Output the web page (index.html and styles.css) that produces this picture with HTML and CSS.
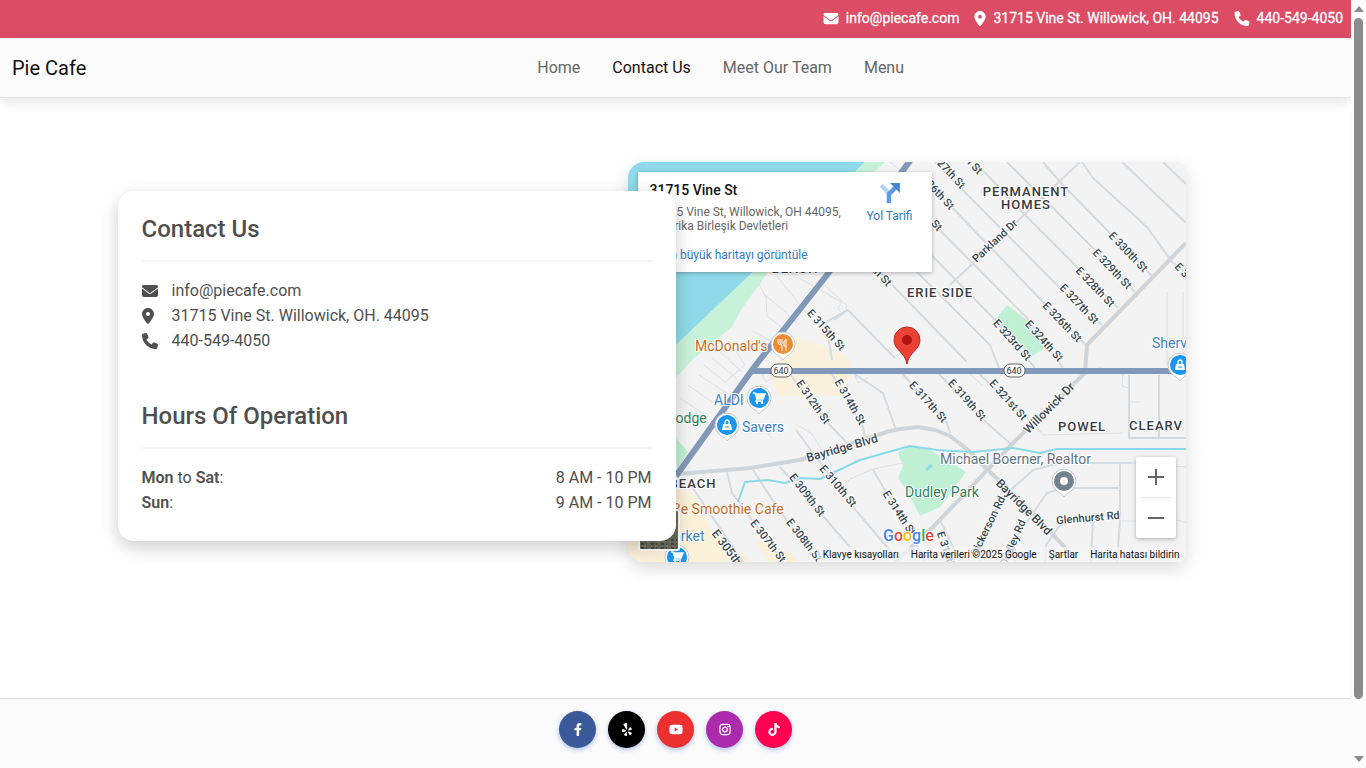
FILE: index.html
```html
<!DOCTYPE html>
<html lang="en">
<head>
  <meta charset="UTF-8">
  <meta name="viewport" content="width=device-width, initial-scale=1.0">
  <title>Pie Cafe - Contact Us</title>
  <link rel="stylesheet" href="styles.css">
</head>
<body>

  <!-- shared icons -->
  <svg class="sprite" aria-hidden="true">
    <symbol id="envelope" viewBox="0 0 512 512"><path d="M48 64C21.5 64 0 85.5 0 112c0 15.1 7.1 29.3 19.2 38.4L236.8 313.6c11.4 8.5 27 8.5 38.4 0L492.8 150.4c12.1-9.1 19.2-23.3 19.2-38.4c0-26.5-21.5-48-48-48L48 64zM0 176L0 384c0 35.3 28.7 64 64 64l384 0c35.3 0 64-28.7 64-64l0-208L294.4 339.2c-22.8 17.1-54 17.1-76.8 0L0 176z"/></symbol>
    <symbol id="location" viewBox="0 0 384 512"><path d="M215.7 499.2C267 435 384 279.4 384 192C384 86 298 0 192 0S0 86 0 192c0 87.4 117 243 168.3 307.2c12.3 15.3 35.1 15.3 47.4 0zM192 128a64 64 0 1 1 0 128 64 64 0 1 1 0-128z"/></symbol>
    <symbol id="phone" viewBox="0 0 512 512"><path d="M164.9 24.6c-7.7-18.6-28-28.5-47.4-23.2l-88 24C12.1 30.2 0 46 0 64C0 311.4 200.6 512 448 512c18 0 33.8-12.1 38.6-29.5l24-88c5.3-19.4-4.6-39.7-23.2-47.4l-96-40c-16.3-6.8-35.2-2.1-46.3 11.6L304.7 368C234.3 334.7 177.3 277.7 144 207.3L193.3 167c13.7-11.2 18.4-30 11.6-46.3l-40-96z"/></symbol>
    <symbol id="cart" viewBox="0 0 14 14"><path d="M1 2h2l2 6h6l2-5H4M5 8l-1 2h7" fill="none" stroke="#fff" stroke-width="1.4"/><path d="M4 3h9l-2 5H5z" fill="#fff"/><circle cx="5" cy="12" r="1.2" fill="#fff"/><circle cx="10" cy="12" r="1.2" fill="#fff"/></symbol>
    <symbol id="bag" viewBox="0 0 14 14"><path d="M3 6h8l1 6H2z" fill="#fff"/><path d="M5 7V4a2 2 0 0 1 4 0v3" fill="none" stroke="#fff" stroke-width="1.3"/><path d="M5 9h4" stroke="#1a96ee"/></symbol>
    <symbol id="marker" viewBox="0 0 28 32"><path d="M14 30C12 26 8 26 5 22a12 12 0 1 1 18 0C20 26 16 26 14 30z" fill="#fff" stroke="#c4c9ce" stroke-width="1"/><circle cx="14" cy="14" r="10" fill="currentColor"/></symbol>
  </svg>

  <div class="page">
    <header>
      <div class="topbar">
        <span class="topbar-item"><svg class="icon"><use href="#envelope"/></svg>info@piecafe.com</span>
        <span class="topbar-item"><svg class="icon icon-narrow"><use href="#location"/></svg>31715 Vine St. Willowick, OH. 44095</span>
        <span class="topbar-item"><svg class="icon"><use href="#phone"/></svg>440-549-4050</span>
      </div>
      <nav class="navbar">
        <a class="brand" href="#">Pie Cafe</a>
        <div class="nav-links">
          <a href="#">Home</a>
          <a class="active" href="#">Contact Us</a>
          <a href="#">Meet Our Team</a>
          <a href="#">Menu</a>
        </div>
      </nav>
    </header>

    <main class="container">
      <section class="card">
        <h2>Contact Us</h2>
        <hr>
        <ul class="contact-list">
          <li><span class="contact-icon"><svg><use href="#envelope"/></svg></span>info@piecafe.com</li>
          <li><span class="contact-icon"><svg class="pin"><use href="#location"/></svg></span>31715 Vine St. Willowick, OH. 44095</li>
          <li><span class="contact-icon"><svg><use href="#phone"/></svg></span>440-549-4050</li>
        </ul>
        <h2>Hours Of Operation</h2>
        <hr>
        <div class="hours"><span><strong>Mon</strong> to <strong>Sat</strong>:</span><span>8 AM - 10 PM</span></div>
        <div class="hours"><span><strong>Sun</strong>:</span><span>9 AM - 10 PM</span></div>
      </section>

      <section class="map">
        <svg class="map-canvas" viewBox="628 162 558 400" preserveAspectRatio="xMidYMid slice">
          <rect x="628" y="162" width="558" height="400" fill="#f3f3f4"/>
          <!-- water and land areas -->
          <path d="M628 162H865L753 272L676 345L628 390z" fill="#8fd9e8"/>
          <path d="M865 162H885L768 272L741 310L732 327L692 360L676 378V345L753 272z" fill="#c8f1d9"/>
          <path d="M676 438L688 452L677 470z" fill="#bdf0d3"/>
          <path d="M790 337L812 342L850 358V378L840 396H778L770 376z" fill="#faf1dc"/>
          <path d="M628 490H690L712 530L752 562H628zM756 540L790 552L798 562H768z" fill="#fbf0d8"/>
          <path d="M1007 305L1027 320L1045 348L1032 356L1018 345L995 320z" fill="#bff0d4"/>
          <path d="M898 453L910 446L930 450L966 472L940 507L920 516L908 492L898 478L903 466z" fill="#bff0d4"/>
          <path d="M926 470l6 -5" stroke="#8ed9e9" stroke-width="3"/>

          <!-- small lanes -->
          <g class="lane">
            <path d="M758 282L766 298L767 316L790 334M763 293L800 325M776 275L812 320M790 273L847 305L843 314L838 309L842 301L820 281M752 331L774 343M744 339L764 356M730 342L745 365L725 382L704 365M720 352L742 372M712 358L736 378M699 375L728 394M688 385L716 405M680 398L708 417"/>
            <path d="M890 162L900 170M796 424L812 434L832 466M761 372L766 382L776 376M855 375L858 383L868 378M1167 292V365M1183 292V368M1123 372L1122 386L1129 388V376M1130 402H1140M1132 463L1186 467M1122 521H1136M1176 520L1186 522M968 372L982 385M1090 373L1102 366M763 428L772 438M840 492L850 479L873 469L903 463"/>
          </g>
          <!-- streets -->
          <g class="street">
            <path d="M1163 162L1186 184M1122 162L1186 223M1082 162L1093 178L1147 227L1172 262L1186 273M1043 162L1060 182L1152 276M1007 162L1093 248L1135 292M975 162L1025 215L1118 308M935 162L1060 288L1102 325M918 172L1043 302L1086 345M910 200L1027 318L1063 368M905 228L997 322L1035 368M915 270L990 345L999 368M870 262L967 362"/>
            <path d="M1080 162L950 285M832 360L826 322L848 310L895 358M834 320L848 310"/>
            <path d="M790 374L828 423L850 446M832 374L863 427L866 445M853 373L883 393L896 430M899 370L947 423L950 433M935 370L987 423L1012 445M975 370L1037 427"/>
            <path d="M780 467L850 547M796 430L853 507L887 547L900 562M753 470L777 507L817 562M727 472L732 493L783 562M692 487L743 562M873 470L912 535L925 562M940 520L960 562"/>
            <path d="M980 562L985 530L1003 497L1033 470L1060 463H1132M1015 562L1014 540L1047 493L1063 488H1120M1045 562L1046 545L1060 525L1095 514L1120 517M1120 463V520L1117 562M1093 518L1091 562M1129 375V438H1186M1159 375V438"/>
          </g>
          <path class="lane" d="M1037 427L1043 435L1123 433"/>
          <g class="avenue">
            <path d="M1186 243L1087 345L1085 373L1013 443L933 527L895 562M678 474L750 468L800 460L850 444L890 431L900 429L918 427L935 430L950 436L968 450L990 472L1030 510L1072 555"/>
          </g>
          <path class="creek" d="M738 502L745 482L768 480L785 483L800 478L820 479L860 460L910 446L937 450L973 452L1013 448L1040 453L1057 449H1186"/>
          <!-- highways -->
          <path class="highway" d="M912 158L827 275L755 366L676 476"/>
          <path class="highway" d="M753 371H1186"/>

          <g class="shield">
            <rect x="771" y="364" width="21" height="13" rx="6"/><text x="781" y="374">640</text>
            <rect x="1004" y="364" width="21" height="13" rx="6"/><text x="1014" y="374">640</text>
          </g>

          <g class="street-name">
            <text transform="translate(951 174) rotate(47)">27th St</text>
            <text transform="translate(940 195) rotate(47)">26th St</text>
            <text transform="translate(926 214) rotate(47)">325th St</text>
            <text transform="translate(963 154) rotate(47)">E 328th St</text>
            <text transform="translate(995 241) rotate(-43)">Parkland Dr</text>
            <text transform="translate(1128 252) rotate(46)">E 330th St</text>
            <text transform="translate(1112 269) rotate(46)">E 329th St</text>
            <text transform="translate(1095 287) rotate(46)">E 328th St</text>
            <text transform="translate(1079 304) rotate(46)">E 327th St</text>
            <text transform="translate(1062 322) rotate(46)">E 326th St</text>
            <text transform="translate(1044 341) rotate(48)">E 324th St</text>
            <text transform="translate(1012 340) rotate(48)">E 323rd St</text>
            <text transform="translate(1195 284) rotate(46)">E 332nd St</text>
            <text transform="translate(872 266) rotate(47)">E 320th St</text>
            <text transform="translate(826 330) rotate(48)">E 315th St</text>
            <text transform="translate(813 402) rotate(55)">E 312th St</text>
            <text transform="translate(850 402) rotate(60)">E 314th St</text>
            <text transform="translate(928 402) rotate(48)">E 317th St</text>
            <text transform="translate(967 400) rotate(48)">E 319th St</text>
            <text transform="translate(1008 400) rotate(48)">E 321st St</text>
            <text transform="translate(838 486) rotate(50)">E 310th St</text>
            <text transform="translate(807 495) rotate(52)">E 309th St</text>
            <text transform="translate(768 541) rotate(52)">E 307th St</text>
            <text transform="translate(804 540) rotate(52)">E 308th St</text>
            <text transform="translate(899 513) rotate(57)">E 314th St</text>
            <text transform="translate(948 556) rotate(72)">E 316th St</text>
            <text transform="translate(988 526) rotate(-64)">Dickerson Rd</text>
            <text transform="translate(1013 543) rotate(-67)">Dudley Rd</text>
            <text transform="translate(1088 518) rotate(-5)">Glenhurst Rd</text>
          </g>
          <g class="street-name street-name-lg">
            <text transform="translate(731 553) rotate(53)">E 305th St</text>
            <text transform="translate(842 448) rotate(-16)">Bayridge Blvd</text>
            <text transform="translate(1024 507) rotate(45)">Bayridge Blvd</text>
            <text transform="translate(1049 408) rotate(-45)">Willowick Dr</text>
          </g>
          <g class="area-name">
            <text x="1026" y="196">PERMANENT</text>
            <text x="1026" y="209">HOMES</text>
            <text x="940" y="297">ERIE SIDE</text>
            <text x="795" y="273">BEACH</text>
            <text x="1082" y="431">POWEL</text>
            <text x="1156" y="430">CLEARV</text>
            <text x="693" y="488">BEACH</text>
          </g>

          <!-- places -->
          <g class="place">
            <text class="food" x="695" y="351">McDonald's</text>
            <text class="food" x="672" y="514">Be Smoothie Cafe</text>
            <text class="shop" x="714" y="405">ALDI</text>
            <text class="shop" x="742" y="432">Savers</text>
            <text class="shop" x="661" y="541">Market</text>
            <text class="shop" x="1152" y="348">Sherv</text>
            <text class="park" x="668" y="423">Lodge</text>
            <text class="park" x="905" y="497">Dudley Park</text>
            <text class="office" x="940" y="464">Michael Boerner, Realtor</text>
          </g>
          <use class="food-marker" href="#marker" x="769" y="330" width="28" height="32"/>
          <path d="M780 339v3q0 3 2 3v6M782 339v5M778 339v3q0 3 3 3M786 351v-12q-3 2-2 7h2" fill="none" stroke="#fff"/>
          <g class="shop-marker">
            <use href="#marker" x="745" y="384" width="28" height="32"/>
            <use href="#marker" x="713" y="411" width="28" height="32"/>
            <use href="#marker" x="1166" y="351" width="28" height="32"/>
            <use href="#marker" x="663" y="543" width="28" height="32"/>
          </g>
          <use class="office-marker" href="#marker" x="1050" y="467" width="28" height="32"/>
          <circle cx="1064" cy="481" r="4" fill="#fff"/>
          <use href="#cart" x="752" y="391" width="14" height="14"/>
          <use href="#bag" x="720" y="418" width="14" height="14"/>
          <use href="#bag" x="1173" y="358" width="14" height="14"/>
          <use href="#cart" x="670" y="550" width="14" height="14"/>

          <path d="M907 364C905 352 894 350 894 340a13 13 0 0 1 26 0C920 350 909 352 907 364z" fill="#ea4335" stroke="#c5221f"/>
          <circle cx="907" cy="340" r="5" fill="#b31412"/>

          <!-- satellite thumbnail -->
          <rect x="639" y="510" width="40" height="40" rx="2" fill="#6a6a5c" stroke="#fff" stroke-width="2"/>
          <path d="M641 540h36M641 544h36M641 548h36" stroke="#46493f" stroke-width="2" stroke-dasharray="3 2 1 4"/>
          <path d="M643 542h34M640 546h36" stroke="#969283" stroke-dasharray="1 3 2 5"/>
          <text class="google" x="883" y="541"><tspan fill="#4285f4">G</tspan><tspan fill="#ea4335">o</tspan><tspan fill="#fbbc04">o</tspan><tspan fill="#4285f4">g</tspan><tspan fill="#34a853">l</tspan><tspan fill="#ea4335">e</tspan></text>
        </svg>

        <div class="place-card">
          <div class="place-text">
            <strong>31715 Vine St</strong>
            <p>31715 Vine St, Willowick, OH 44095, Amerika Birleşik Devletleri</p>
            <a href="#">Daha büyük haritayı görüntüle</a>
          </div>
          <a class="directions" href="#">
            <svg viewBox="0 0 20 20"><path d="M2 3L9 10" stroke="#b5d2f3" stroke-width="4"/><path d="M9 19V11L15 5" fill="none" stroke="#5d9ae3" stroke-width="4"/><path d="M10 1H19V10z" fill="#4486d8"/></svg>
            Yol Tarifi
          </a>
        </div>

        <div class="zoom">
          <button type="button" aria-label="Yakınlaştır"><svg viewBox="0 0 18 18"><path d="M1 9H17M9 1V17"/></svg></button>
          <button type="button" aria-label="Uzaklaştır"><svg viewBox="0 0 18 18"><path d="M1 9H17"/></svg></button>
        </div>

        <div class="map-footer">
          <button type="button">Klavye kısayolları</button>
          <span>Harita verileri ©2025 Google</span>
          <a href="#">Şartlar</a>
          <a href="#">Harita hatası bildirin</a>
        </div>
      </section>
    </main>

    <footer class="footer">
      <a class="social facebook" href="#" aria-label="Facebook"><svg viewBox="0 0 320 512"><path d="M279.14 288l14.22-92.66h-88.91v-60.13c0-25.35 12.42-50.06 52.24-50.06h40.42V6.26S260.43 0 225.36 0c-73.22 0-121.08 44.38-121.08 124.72v70.62H22.89V288h81.39v224h100.17V288z"/></svg></a>
      <a class="social yelp" href="#" aria-label="Yelp"><svg viewBox="0 0 384 512"><path d="M42.9 240.32l99.62 48.61c19.2 9.4 16.2 37.51-4.5 42.71L30.5 358.45a22.79 22.79 0 0 1-28.21-19.6 197.16 197.16 0 0 1 9-85.32 22.8 22.8 0 0 1 31.61-13.21zm44 239.25a199.45 199.45 0 0 0 79.42 32.11A22.78 22.78 0 0 0 192.94 490l3.9-110.82c.7-21.3-25.5-31.91-39.81-16.1l-74.21 82.4a22.82 22.82 0 0 0 4.09 34.09zm145.34-109.92l58.81 94a22.93 22.93 0 0 0 34 5.5 198.36 198.36 0 0 0 52.71-67.61A23 23 0 0 0 364.17 370l-105.42-34.26c-20.31-6.5-37.81 15.8-26.51 33.91zm148.33-132.23a197.44 197.44 0 0 0-50.41-69.31 22.85 22.85 0 0 0-34 4.4l-62 91.92c-11.9 17.7 4.7 40.61 25.2 34.71L366 268.63a23 23 0 0 0 14.61-31.21zM62.11 30.18a22.86 22.86 0 0 0-9.9 32l104.12 180.44c11.7 20.2 42.61 11.9 42.61-11.4V22.88a22.67 22.67 0 0 0-24.5-22.8 320.37 320.37 0 0 0-112.33 30.1z"/></svg></a>
      <a class="social youtube" href="#" aria-label="YouTube"><svg viewBox="0 0 576 512"><path d="M549.655 124.083c-6.281-23.65-24.787-42.276-48.284-48.597C458.781 64 288 64 288 64S117.22 64 74.629 75.486c-23.497 6.322-42.003 24.947-48.284 48.597-11.412 42.867-11.412 132.305-11.412 132.305s0 89.438 11.412 132.305c6.281 23.65 24.787 41.5 48.284 47.821C117.22 448 288 448 288 448s170.78 0 213.371-11.486c23.497-6.321 42.003-24.171 48.284-47.821 11.412-42.867 11.412-132.305 11.412-132.305s0-89.438-11.412-132.305zm-317.51 213.508V175.185l142.739 81.205-142.739 81.201z"/></svg></a>
      <a class="social instagram" href="#" aria-label="Instagram"><svg viewBox="0 0 448 512"><rect x="24" y="56" width="400" height="400" rx="110" fill="none" stroke="#fff" stroke-width="48"/><circle cx="224" cy="256" r="92" fill="none" stroke="#fff" stroke-width="48"/><circle cx="342" cy="138" r="28"/></svg></a>
      <a class="social tiktok" href="#" aria-label="TikTok"><svg viewBox="0 0 448 512"><path d="M448,209.91a210.06,210.06,0,0,1-122.77-39.25V349.38A162.55,162.55,0,1,1,185,188.31V278.2a74.62,74.62,0,1,0,52.23,71.18V0l88,0a121.18,121.18,0,0,0,1.86,22.17h0A122.18,122.18,0,0,0,381,102.39a121.43,121.43,0,0,0,67,20.14Z"/></svg></a>
    </footer>
  </div>

  <div class="scrollbar" aria-hidden="true">
    <svg viewBox="0 0 10 6"><path d="M5 0L10 6H0z"/></svg>
    <div class="track"><div class="thumb"></div></div>
    <svg viewBox="0 0 10 6"><path d="M0 0H10L5 6z"/></svg>
  </div>

</body>
</html>
```
FILE: styles.css
```css
* {
  box-sizing: border-box;
}
body {
  margin: 0;
  display: flex;
  min-height: 100vh;
  font-family: Roboto, sans-serif;
  font-size: 16px;
  line-height: 25px;
  color: #4f4f4f;
  background: #fff;
}
a {
  color: inherit;
  text-decoration: none;
}
button {
  font-family: inherit;
  border: none;
  padding: 0;
  cursor: pointer;
}
.sprite {
  position: absolute;
  width: 0;
  height: 0;
}
.page {
  flex: 1;
  min-width: 0;
  display: flex;
  flex-direction: column;
}

/* header */
.topbar {
  display: flex;
  justify-content: flex-end;
  align-items: center;
  gap: 15px;
  height: 38px;
  padding: 0 8px 2px;
  background: #dc4c64;
  color: #fff;
  font-size: 14px;
  -webkit-text-stroke: 0.3px #fff;
}
.topbar-item {
  display: flex;
  align-items: center;
  gap: 7px;
}
.icon {
  width: 16px;
  height: 15px;
  fill: #fff;
}
.icon-narrow {
  width: 12px;
}
.navbar {
  display: flex;
  align-items: center;
  height: 60px;
  padding: 0 12px;
  background: #fbfbfb;
  border-bottom: 1px solid #e0e0e0;
  box-shadow: 0 4px 12px rgba(0,0,0,0.1);
}
.brand {
  margin-right: 16px;
  padding-top: 2px;
  font-size: 20px;
  color: #111;
}
.nav-links {
  flex: 1;
  display: flex;
  justify-content: center;
  gap: 32px;
  color: #666;
}
.nav-links .active {
  color: #111;
}

/* contact card and map */
.container {
  flex: 1;
  display: flex;
  align-items: center;
  align-self: center;
  align-content: flex-start;
  flex-wrap: wrap;
  width: 100%;
  max-width: 1140px;
  padding: 64px 12px;
}
.card {
  position: relative;
  z-index: 1;
  flex: 0 0 50%;
  padding: 24px 24px 26px;
  background: #fff;
  border-radius: 16px;
  box-shadow: 0 6px 18px rgba(0,0,0,0.2);
}
h2 {
  margin: 0;
  font-size: 24px;
  font-weight: 500;
  line-height: 29px;
}
hr {
  height: 2px;
  margin: 16px 0;
  border: none;
  background: #f6f6f6;
}
.contact-list {
  list-style: none;
  margin: 0 0 49px;
  padding: 0;
}
.contact-list li {
  display: flex;
  align-items: center;
}
.contact-icon {
  display: flex;
  width: 30px;
}
.contact-icon svg {
  width: 16px;
  height: 16px;
  fill: #4f4f4f;
}
.contact-icon .pin {
  width: 12px;
}
.hours {
  display: flex;
  justify-content: space-between;
}
.hours strong {
  font-weight: 600;
}

.map {
  position: relative;
  flex: 0 0 50%;
  height: 400px;
  margin: 0 0 8px -48px;
  border-radius: 16px 8px 8px 16px;
  box-shadow: 0 6px 18px rgba(0,0,0,0.15);
  overflow: hidden;
}
.map-canvas {
  display: block;
  width: 100%;
  height: 100%;
}
.lane, .street, .avenue, .creek, .highway {
  fill: none;
  stroke-linejoin: round;
}
.lane {
  stroke: #dcdfe3;
  stroke-width: 1;
}
.street {
  stroke: #d5dade;
  stroke-width: 2;
}
.avenue {
  stroke: #cfd4d9;
  stroke-width: 4;
}
.creek {
  stroke: #8bd8e8;
  stroke-width: 2;
}
.highway {
  stroke: #8298b8;
  stroke-width: 6;
}
.map-canvas text {
  stroke: #fff;
  stroke-width: 2px;
  stroke-linejoin: round;
  paint-order: stroke;
}
.shield rect {
  fill: #fff;
  stroke: #5f6266;
}
.shield text {
  font-size: 9px;
  text-anchor: middle;
  fill: #333;
}
.street-name {
  font-size: 11px;
  font-weight: 500;
  text-anchor: middle;
  dominant-baseline: central;
  fill: #37474f;
}
.street-name-lg {
  font-size: 12px;
}
.area-name {
  font-size: 13px;
  font-weight: 500;
  letter-spacing: 1px;
  text-anchor: middle;
  fill: #38393d;
}
.place {
  font-size: 14px;
}
.food {
  fill: #c46a25;
}
.shop {
  fill: #3d7fc4;
}
.park {
  fill: #2f7f5c;
}
.office {
  fill: #66747e;
}
.food-marker {
  color: #ef8b33;
}
.shop-marker {
  color: #1a96ee;
}
.office-marker {
  color: #71828c;
}
.map-canvas .google {
  font-size: 16px;
  font-weight: 500;
}

.place-card {
  position: absolute;
  top: 10px;
  left: 10px;
  display: flex;
  justify-content: space-between;
  width: 294px;
  height: 100px;
  padding: 10px 19px 10px 12px;
  background: #fff;
  box-shadow: 0 1px 4px rgba(0,0,0,0.3);
  font-size: 12px;
  line-height: 14px;
}
.place-text {
  width: 200px;
}
.place-text strong {
  display: block;
  font-size: 14px;
  font-weight: 500;
  line-height: 17px;
  color: #111;
}
.place-text p {
  margin: 6px 0 15px;
  color: #666;
}
.place-card a {
  color: #3279c5;
}
.directions {
  display: flex;
  flex-direction: column;
  align-items: center;
  gap: 5px;
  white-space: nowrap;
}
.directions svg {
  width: 22px;
  height: 22px;
}
.zoom {
  position: absolute;
  right: 10px;
  bottom: 24px;
  display: flex;
  flex-direction: column;
  width: 40px;
  padding: 0 5px;
  background: #fff;
  border-radius: 2px;
  box-shadow: 0 1px 4px rgba(0,0,0,0.3);
}
.zoom button {
  height: 40px;
  background: none;
}
.zoom button + button {
  height: 41px;
  border-top: 1px solid #e6e6e6;
}
.zoom svg {
  display: block;
  width: 18px;
  height: 18px;
  margin: auto;
  stroke: #666;
  stroke-width: 2;
}
.map-footer {
  position: absolute;
  right: 0;
  bottom: 0;
  display: flex;
  gap: 12px;
  padding: 0 6px;
  background: rgba(245,245,245,0.7);
  font-size: 10px;
  line-height: 15px;
  color: #111;
}
.map-footer button {
  background: none;
  font-size: 10px;
  color: #111;
}

/* footer */
.footer {
  display: flex;
  justify-content: center;
  gap: 12px;
  padding: 12px 0 20px;
  background: #fbfbfb;
  border-top: 1px solid #e0e0e0;
}
.social {
  display: flex;
  align-items: center;
  justify-content: center;
  width: 37px;
  height: 37px;
  border-radius: 50%;
  box-shadow: 0 2px 5px rgba(59,113,202,0.4);
}
.social svg {
  width: 14px;
  height: 13px;
  fill: #fff;
}
.facebook {
  background: #3b5998;
}
.yelp {
  background: #000;
}
.youtube {
  background: #ed302f;
}
.instagram {
  background: #ac2bac;
}
.tiktok {
  background: #ff0050;
}

.scrollbar {
  position: sticky;
  top: 0;
  display: flex;
  flex-direction: column;
  align-items: center;
  gap: 6px;
  width: 15px;
  height: 100vh;
  padding: 6px 0;
  background: #fcfcfc;
}
.scrollbar svg {
  width: 10px;
  height: 6px;
  fill: #8b8b8b;
}
.track {
  flex: 1;
  width: 9px;
}
.thumb {
  height: 93%;
  border-radius: 5px;
  background: #8b8b8b;
}
```
